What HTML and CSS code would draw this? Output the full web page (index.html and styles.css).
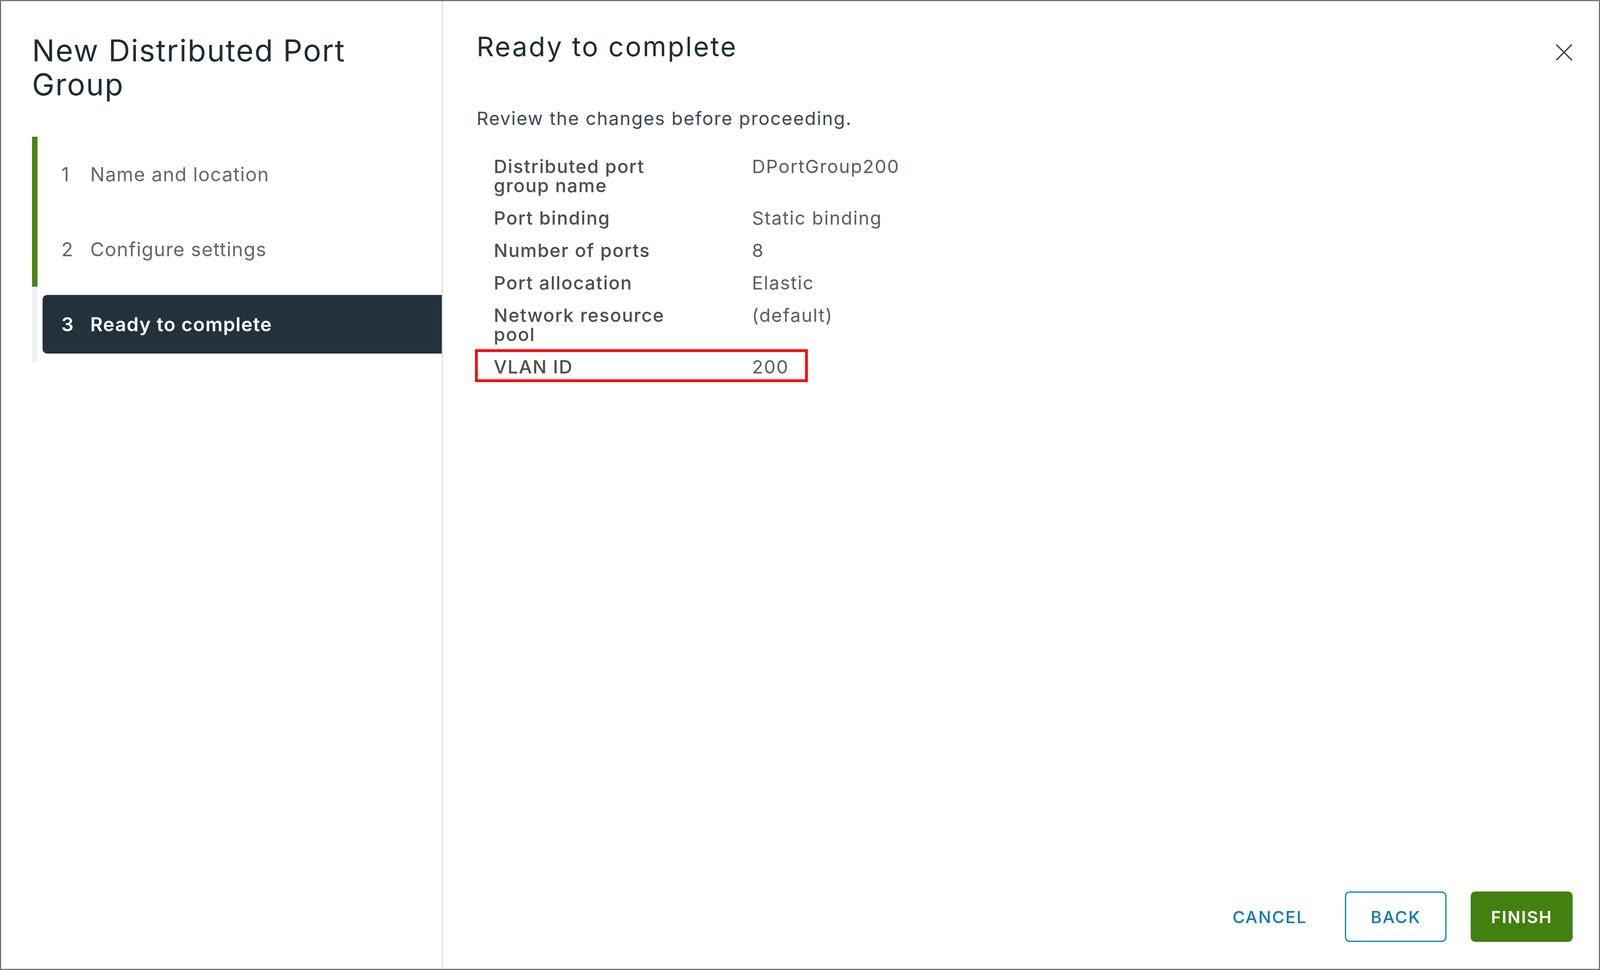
FILE: index.html
```html
<!DOCTYPE html>
<html lang="en">

<head>
    <meta charset="UTF-8" />
    <meta name="viewport" content="width=device-width, initial-scale=1" />
    <title>New Distributed Port Group</title>
    <link rel="stylesheet" href="styles.css">
</head>

<body>
    <div class="wizard">
        <div class="wizard-nav">
            <h2 class="wizard-title">New Distributed Port Group</h2>

            <div class="steps">
                <div class="step done">
                    <div class="step-box"><span class="num">1</span>Name and location</div>
                </div>
                <div class="step done">
                    <div class="step-box"><span class="num">2</span>Configure settings</div>
                </div>
                <div class="step current">
                    <div class="step-box"><span class="num">3</span>Ready to complete</div>
                </div>
            </div>
        </div>

        <div class="wizard-body">
            <div class="body-header">
                <h3>Ready to complete</h3>
                <button class="close" aria-label="Close">
                    <svg width="44" height="44" viewBox="0 0 44 44">
                        <path d="M3 3 L41 41 M41 3 L3 41" />
                    </svg>
                </button>
            </div>

            <p class="intro">Review the changes before proceeding.</p>

            <div class="summary">
                <div class="row">
                    <div class="label">Distributed port group name</div>
                    <div class="value">DPortGroup200</div>
                </div>
                <div class="row">
                    <div class="label">Port binding</div>
                    <div class="value">Static binding</div>
                </div>
                <div class="row">
                    <div class="label">Number of ports</div>
                    <div class="value">8</div>
                </div>
                <div class="row">
                    <div class="label">Port allocation</div>
                    <div class="value">Elastic</div>
                </div>
                <div class="row">
                    <div class="label">Network resource pool</div>
                    <div class="value">(default)</div>
                </div>
                <!-- 赤枠でVLAN IDを強調 -->
                <div class="row highlight">
                    <div class="label">VLAN ID</div>
                    <div class="value">200</div>
                </div>
            </div>

            <div class="footer">
                <button class="btn btn-link">Cancel</button>
                <button class="btn btn-outline">Back</button>
                <button class="btn btn-primary">Finish</button>
            </div>
        </div>
    </div>
</body>

</html>
```

FILE: styles.css
```css
:root {
    --title-color: #1e2c35;
    --text-color: #5e5e5e;
    --accent: #0b7bb6;
    --success: #42800f;
    --font: "Inter", "Noto Sans", sans-serif;
}

html,
body {
    margin: 0;
    padding: 0;
    height: 100%;
}

body {
    font-family: var(--font);
    background-color: #fff;
    color: var(--text-color);
}

.wizard {
    display: flex;
    height: 100vh;
    border: 3px solid #777;
    box-sizing: border-box;
}

/* 左側のステップ一覧 */
.wizard-nav {
    width: 1131px;
    flex-shrink: 0;
    box-sizing: border-box;
    border-right: 3px solid #d9dde2;
    padding: 83px 0 0 79px;
}

.wizard-title {
    margin: 0 0 90px;
    max-width: 900px;
    font-size: 77px;
    line-height: 87px;
    font-weight: 400;
    letter-spacing: 0.03em;
    color: var(--title-color);
}

.step {
    border-left: 14px solid #eef2f6;
    padding: 21px 0 21px 13px;
}

.step.done {
    border-left-color: #48840f;
}

.step-box {
    height: 150px;
    display: flex;
    align-items: center;
    padding-left: 48px;
    font-size: 49px;
    letter-spacing: 0.03em;
    color: #666;
    border-radius: 12px 0 0 12px;
}

.step-box .num {
    width: 74px;
}

.step.current .step-box {
    background-color: #22313b;
    color: #fff;
    font-weight: 600;
}

/* 右側の内容 */
.wizard-body {
    flex: 1;
    display: flex;
    flex-direction: column;
    padding: 75px 67px 69px 86px;
}

.body-header {
    display: flex;
    justify-content: space-between;
    align-items: flex-start;
}

.body-header h3 {
    margin: 0;
    font-size: 69px;
    line-height: 83px;
    font-weight: 400;
    letter-spacing: 0.05em;
    color: var(--title-color);
}

.close {
    margin-top: 34px;
    padding: 0;
    border: none;
    background: none;
    line-height: 0;
}

.close path {
    stroke: #34434d;
    stroke-width: 3.5;
    stroke-linecap: round;
    fill: none;
}

.intro {
    margin: 114px 0 0;
    font-size: 47px;
    line-height: 56px;
    letter-spacing: 0.045em;
    color: #3d4952;
}

.summary {
    margin-top: 53px;
}

.row {
    display: grid;
    grid-template-columns: 661px 1fr;
    padding: 17px 0 17px 44px;
    font-size: 47px;
    line-height: 49px;
    letter-spacing: 0.045em;
}

.row .label {
    max-width: 480px;
    font-weight: 500;
    color: #4d4d4d;
}

.row .value {
    color: var(--text-color);
}

.row.highlight {
    position: relative;
}

.row.highlight::after {
    content: "";
    position: absolute;
    left: -4px;
    top: -3px;
    width: 852px;
    height: 84px;
    border: 7px solid #f00;
    box-sizing: border-box;
}

/* ボタン */
.footer {
    margin-top: auto;
    display: flex;
    justify-content: flex-end;
}

.btn {
    height: 129px;
    font-family: var(--font);
    font-size: 43px;
    font-weight: 500;
    letter-spacing: 0.06em;
    text-transform: uppercase;
    border-radius: 12px;
    padding: 0;
}

.btn-link {
    padding: 0 35px;
    margin-right: 62px;
    border: none;
    background: none;
    color: var(--accent);
}

.btn-outline {
    width: 260px;
    margin-right: 62px;
    border: 3px solid var(--accent);
    background-color: #fff;
    color: var(--accent);
}

.btn-primary {
    width: 261px;
    border: none;
    background-color: var(--success);
    color: #fff;
    font-weight: 600;
}
```
